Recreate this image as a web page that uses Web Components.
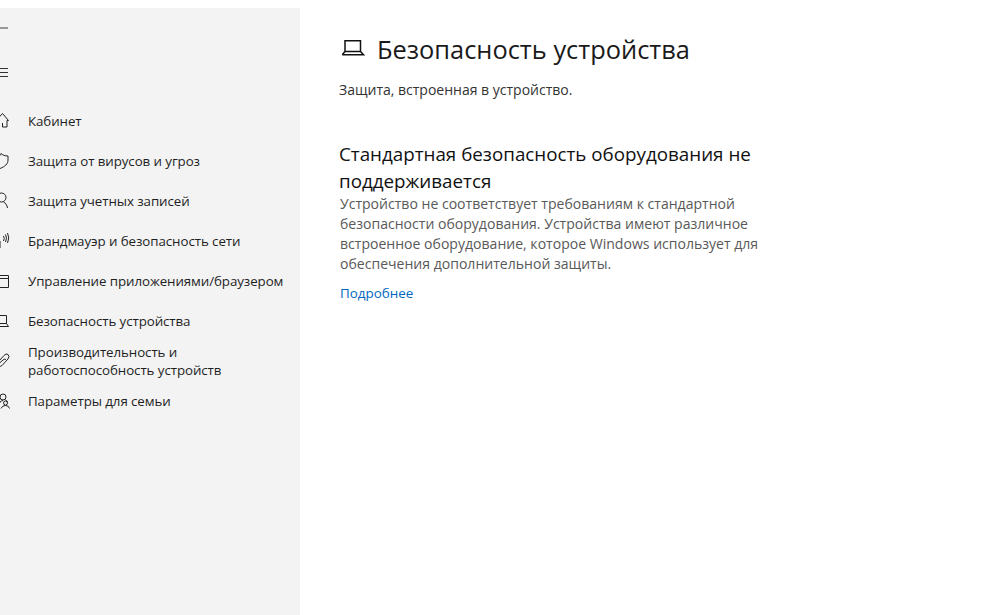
<!DOCTYPE html>
<html><head><meta charset="utf-8"><style>
html,body{margin:0;padding:0;background:#fff;height:100%;overflow:hidden}
body{font-family:"Open Sans","Noto Sans",sans-serif}
</style></head><body>
<sec-app>
<sec-nav>
<nav-item icon="home">Кабинет</nav-item>
<nav-item icon="shield">Защита от вирусов и угроз</nav-item>
<nav-item icon="person">Защита учетных записей</nav-item>
<nav-item icon="wifi">Брандмауэр и безопасность сети</nav-item>
<nav-item icon="app">Управление приложениями/браузером</nav-item>
<nav-item icon="laptop">Безопасность устройства</nav-item>
<nav-item icon="heart" multi>Производительность и<br>работоспособность устройств</nav-item>
<nav-item icon="family">Параметры для семьи</nav-item>
</sec-nav>
<sec-main></sec-main>
</sec-app>
<script>
const ICONS={
home:'<path d="M-3 7.500 2.500 1.500 8.500 8.500H7V15H2.500V11"/>',
shield:'<path d="M-4 4.500c3 0 5-1 5-3 1.500 1.500 4 2.500 7 2.500v4c0 4-3 6.500-8 8.500"/>',
person:'<circle cx="1.500" cy="5.500" r="4.500"/><path d="M3.500 10c2 1 3.500 3 4 6"/>',
wifi:'<path d="M0 16V9M3.500 4q1.500 2.500 0 5M5.500 2.500q2 3.500 0 7.500M7.500 1q2.500 5 0 10"/>',
app:'<path d="M-1 3.500H8.500V15.500H-1M-1 6.500H8.500"/>',
laptop:'<path d="M-1 3.500H6.500V11.500H-1M-1 14.500H8.500L6.500 11.500"/>',
heart:'<path d="M-1 9 4 3.500Q6 1 8 2.500T8 7L2 13.500Q0 15-1 14M-1 11.500 3 8Q5 6.500 6 7.500"/>',
family:'<circle cx="3" cy="5" r="3"/><path d="M-1 14Q-1 9 3 8.500M5.500 8Q7 8.500 7.500 10"/><circle cx="5.500" cy="11" r="2"/><path d="M1 16.500Q2 13.500 5.500 13.500T9.500 16.500"/>'
};
class SecApp extends HTMLElement{constructor(){super();this.attachShadow({mode:'open'}).innerHTML=`<style>:host{display:flex;width:981px;height:615px;padding-top:8px;box-sizing:border-box}</style><slot></slot>`}}
class SecNav extends HTMLElement{constructor(){super();this.attachShadow({mode:'open'}).innerHTML=`<style>
:host{display:flex;flex-direction:column;width:300px;flex:none;background:#f3f3f3;box-sizing:border-box;padding-top:93px}
.bar{position:absolute;left:0;top:27px;width:8px;height:2px;background:#999}
.menu{position:absolute;left:0;top:68px;width:8px;height:9px;border-top:1px solid #333;border-bottom:1px solid #333;box-sizing:border-box}
.menu::after{content:"";display:block;height:1px;background:#333;margin-top:3px}
</style><div class="bar"></div><div class="menu"></div><slot></slot>`}}
class NavItem extends HTMLElement{constructor(){super();const ic=ICONS[this.getAttribute('icon')];this.attachShadow({mode:'open'}).innerHTML=`<style>
:host{display:flex;align-items:center;min-height:40px;padding-left:28px;position:relative;font-size:13.330px;line-height:18px;color:#1f1f1f;letter-spacing:-.08px}
:host([multi]){min-height:42px;margin-top:-1px;margin-bottom:-1px}
svg{position:absolute;left:0;top:50%;margin-top:-9px;width:12px;height:18px;fill:none;stroke:#222;stroke-width:1;overflow:hidden}
</style><svg viewBox="0 0 12 18">${ic}</svg><span><slot></slot></span>`}}
class SecMain extends HTMLElement{constructor(){super();this.attachShadow({mode:'open'}).innerHTML=`<style>
:host{display:block;flex:1;padding-left:39px;box-sizing:border-box}
.head{display:flex;align-items:center;gap:14px;margin-top:23px;height:36px}
svg{width:24px;height:24px;fill:none;stroke:#111;stroke-width:1.500;flex:none;overflow:visible}
h1{margin:0;font-weight:400;font-size:25.400px;line-height:36px;color:#1a1a1a}
.sub{margin:13px 0 0;font-size:14px;line-height:20px;color:#333}
h2{margin:41px 0 0;font-weight:400;font-size:18.800px;line-height:27px;width:440px;color:#111}
.body{margin:-1px 0 0 1px;font-size:14.050px;line-height:20px;color:#595959;width:440px}
a{display:block;margin:9px 0 0 1px;font-size:13.400px;line-height:20px;color:#0067c0}
</style>
<div class="head"><svg viewBox="0 0 24 24"><path d="M6 3.750H21.500V14.500H6ZM3.250 17.750H24.500L21.500 14.500M6 14.500 3.250 17.750"/></svg><h1>Безопасность устройства</h1></div>
<p class="sub">Защита, встроенная в устройство.</p>
<h2>Стандартная безопасность оборудования не поддерживается</h2>
<p class="body">Устройство не соответствует требованиям к стандартной безопасности оборудования. Устройства имеют различное встроенное оборудование, которое Windows использует для обеспечения дополнительной защиты.</p>
<a>Подробнее</a>`}}
customElements.define('sec-app',SecApp);customElements.define('sec-nav',SecNav);customElements.define('nav-item',NavItem);customElements.define('sec-main',SecMain);
</script>
</body></html>
